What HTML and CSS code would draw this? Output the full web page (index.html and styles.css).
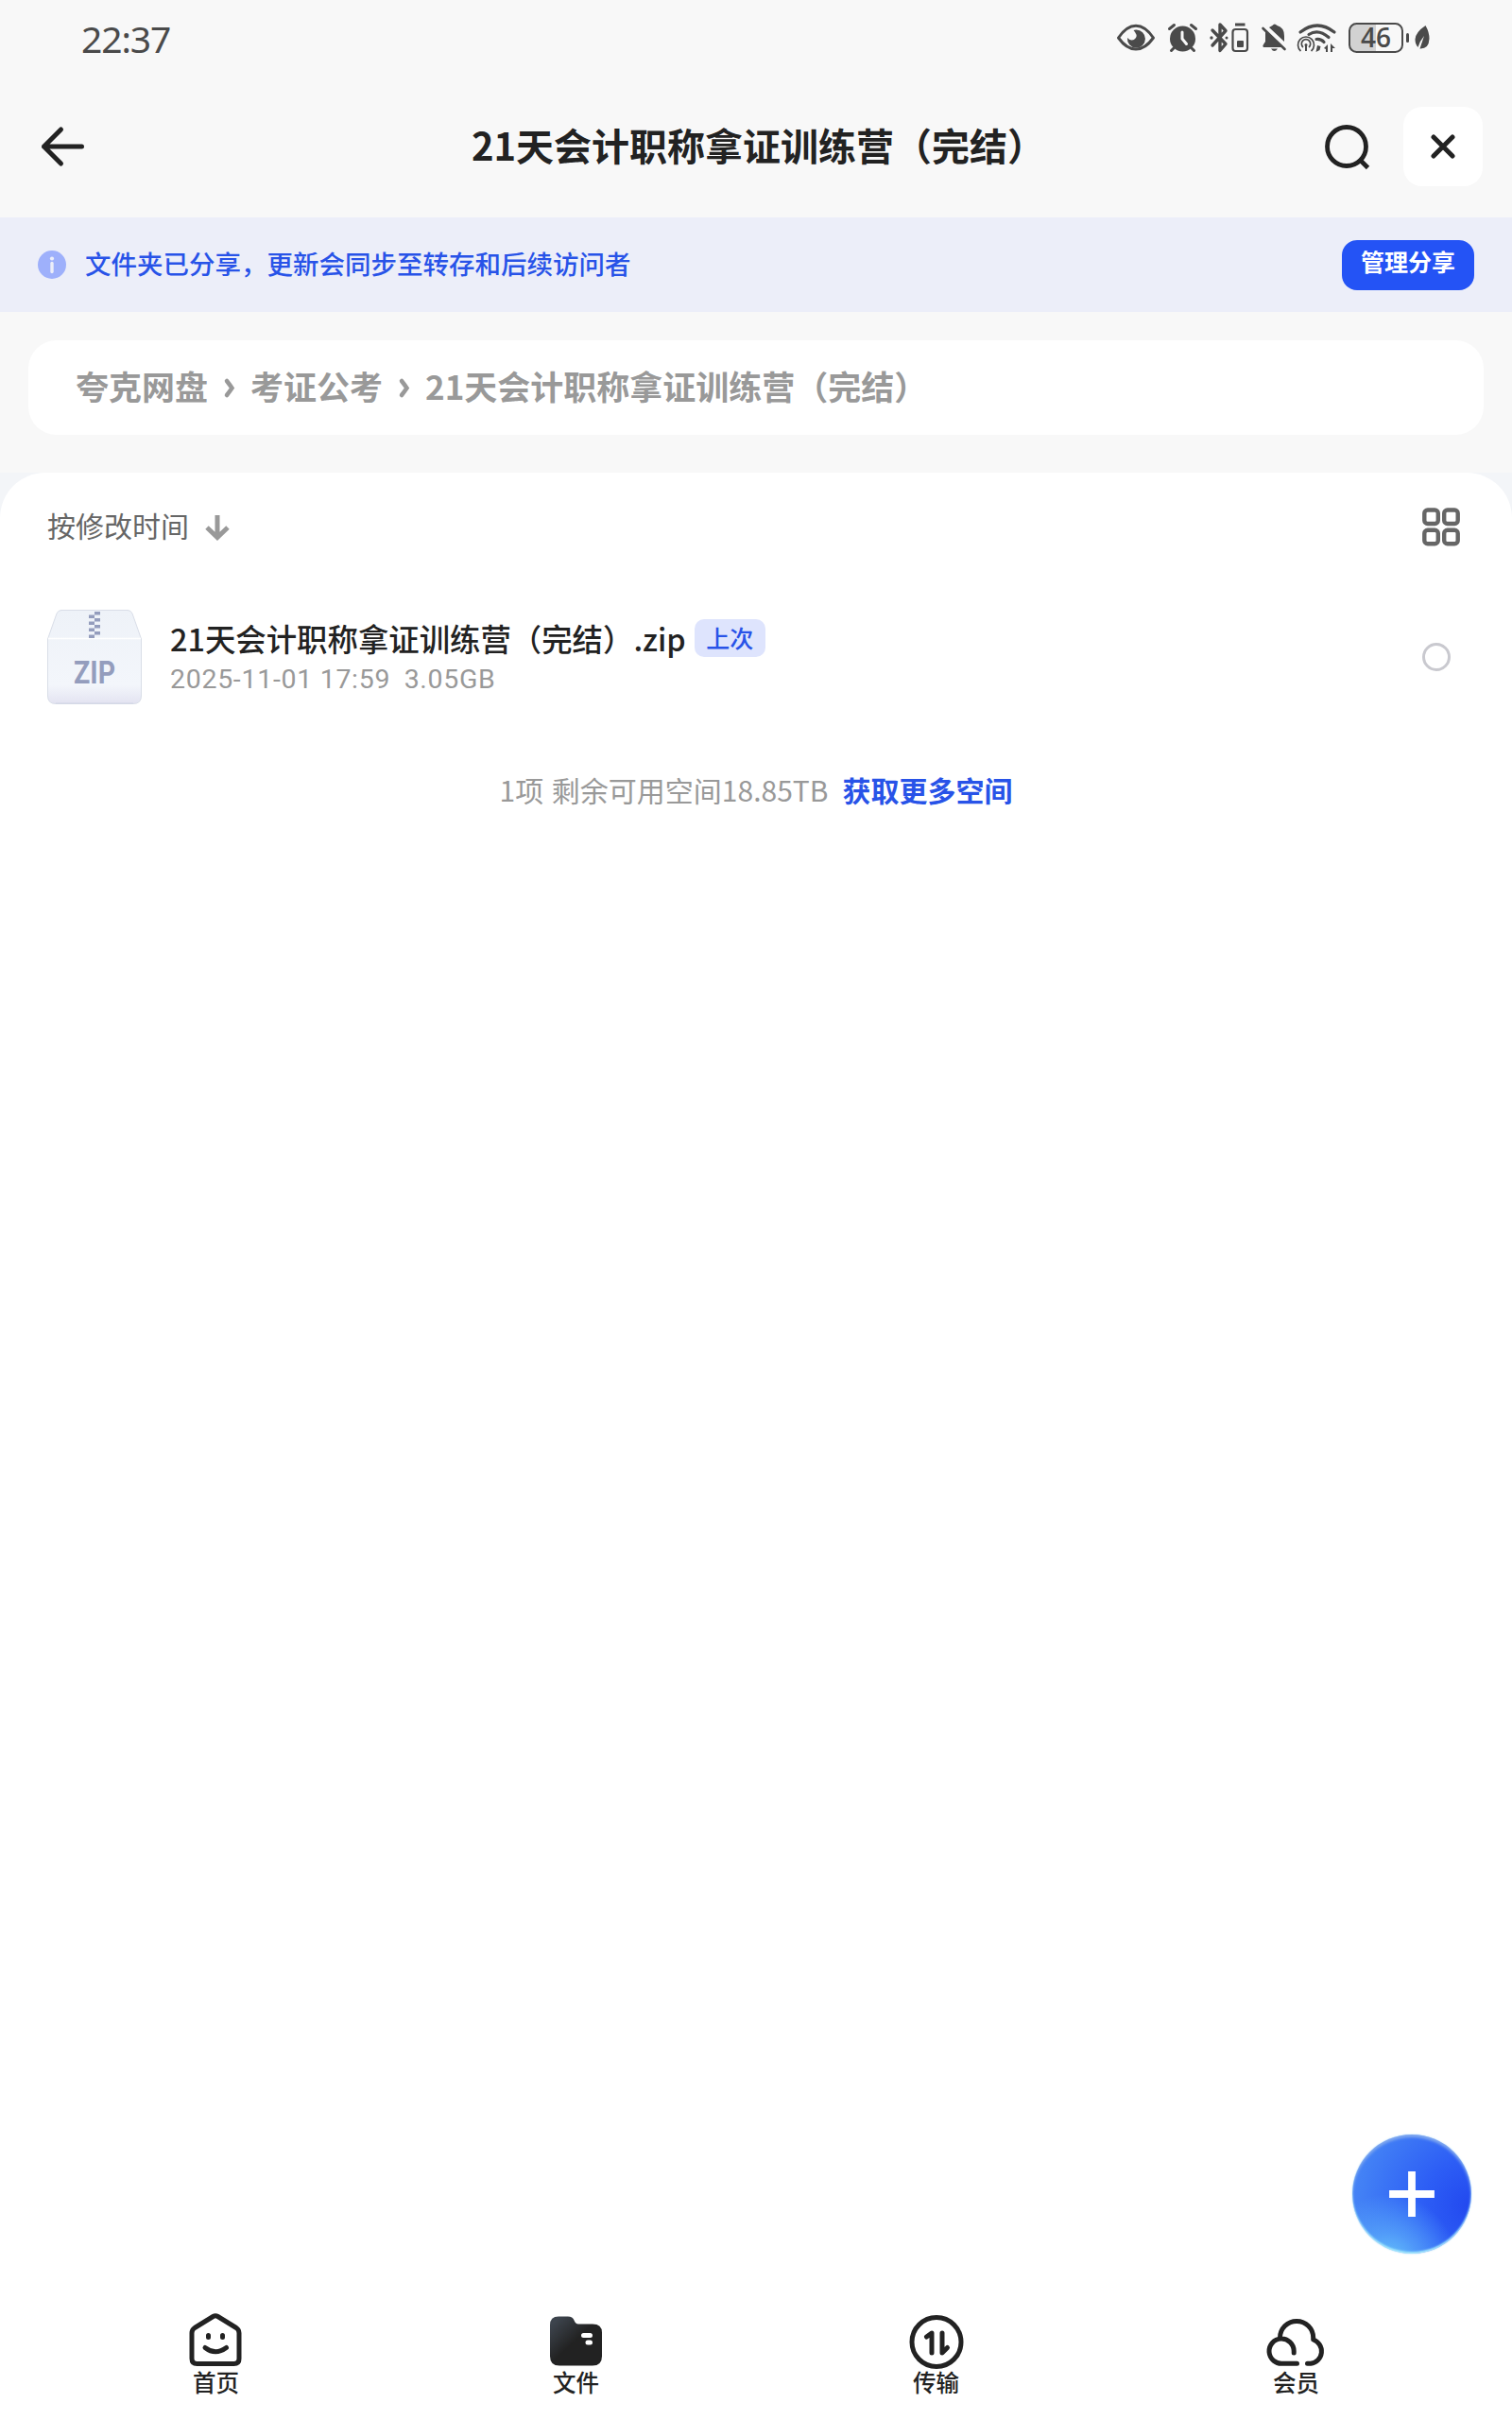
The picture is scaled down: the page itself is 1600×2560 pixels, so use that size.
FILE: index.html
```html
<!DOCTYPE html>
<html lang="zh-CN">
<head>
  <meta charset="UTF-8" />
  <meta name="viewport" content="width=device-width, initial-scale=1.0"/>
  <title>21天会计职称拿证训练营（完结）</title>
  <link rel="stylesheet" href="styles.css">
</head>
<body>

  <div class="status-bar">
    <span class="time">22:37</span>
    <div class="status-icons">
      <svg width="50" height="60" viewBox="20 0 50 60">
        <path d="M23.500 30C35 13 49 13 60.500 30C49 46 35 46 23.500 30Z" fill="none" stroke="#4a4a4a" stroke-width="3" stroke-linejoin="round"/>
        <path d="M42 21.500A9.500 9.500 0 1 1 33 30Q38 35 42 30Q44 27 39.500 22Z" fill="#4a4a4a"/>
      </svg>
      <svg width="44" height="60" viewBox="70 0 44 60">
        <circle cx="91.500" cy="31" r="13.500" fill="#4a4a4a"/>
        <path d="M77.500 20.500l5-4M105.500 20.500l-5-4M82 41l-2.500 2.500M101 41l2.500 2.500" stroke="#4a4a4a" stroke-width="3" stroke-linecap="round"/>
        <path d="M91 24v7l4.500 5.500" fill="none" stroke="#f8f8f8" stroke-width="3" stroke-linecap="round"/>
      </svg>
      <svg width="54" height="60" viewBox="114 0 54 60">
        <path d="M123 22l14 14.500-6 7V16l6 6.500L123 38" fill="none" stroke="#4a4a4a" stroke-width="3.400" stroke-linecap="round" stroke-linejoin="round"/>
        <circle cx="122" cy="30" r="1.700" fill="#4a4a4a"/><circle cx="138" cy="30" r="1.500" fill="#4a4a4a"/>
        <rect x="144.500" y="21" width="15.500" height="23" rx="3" fill="none" stroke="#4a4a4a" stroke-width="2.200"/>
        <path d="M147 16h10.500" stroke="#4a4a4a" stroke-width="3"/>
        <rect x="149" y="33" width="7" height="7" rx="1" fill="#4a4a4a"/>
      </svg>
      <svg width="40" height="60" viewBox="168 0 40 60">
        <path d="M179 22L197 40H177q-1.500-1 0-3l2-3ZM183 19l3.500-2q2-3 5 0q7.500 2 7.500 11v6ZM185 41.500h7q-3.500 5-7 0Z" fill="#4a4a4a"/>
        <path d="M176.500 20L199.500 42" stroke="#4a4a4a" stroke-width="2.600" stroke-linecap="round"/>
      </svg>
      <svg width="52" height="60" viewBox="208 0 52 60" fill="none" stroke="#4a4a4a">
        <path d="M216 24Q234 10 252 24M225 26.500Q235 20 246 29.500M233 31.500Q238 31 241 34.500" stroke-width="3.200" stroke-linecap="round"/>
        <path d="M216.500 44a8.500 8.500 0 1 1 11 0M219 40a4.700 4.700 0 1 1 6 0" stroke-width="1.700"/>
        <circle cx="222" cy="37.500" r="1.500" fill="#4a4a4a" stroke="none"/>
        <path d="M222 38v6" stroke-width="2"/>
        <path d="M234 38l3.500 1-1 4-4 2zM241 41l4-4v8h-2v-3zM248 36l5 5h-3v4h-2z" fill="#4a4a4a" stroke="none"/>
      </svg>
      <svg width="74" height="60" viewBox="260 0 74 60">
        <path d="M296 15h-21q-7 0-7 7v16q0 7 7 7h21z" fill="#d2d2d2"/>
        <rect x="268" y="15" width="56" height="30" rx="7.500" fill="none" stroke="#4a4a4a" stroke-width="2"/>
        <path d="M329.500 26.500v7" stroke="#4a4a4a" stroke-width="3" stroke-linecap="round"/>
        <text x="296" y="39.500" class="battery-num" text-anchor="middle">46</text>
      </svg>
      <svg width="26" height="60" viewBox="334 0 26 60">
        <path d="M348.500 17Q338 24 337.500 31.500Q337.500 37 340.500 40Q342 34 347 28Q345 34 342.500 41.500Q352 42 352.500 31Q352.500 24 348.500 17Z" fill="#4a4a4a"/>
      </svg>
    </div>
  </div>

  <header class="header">
    <button class="back" aria-label="返回">
      <svg width="46" height="44" viewBox="0 0 46 44"><path d="M20.500 4L2.500 22L20.500 40M2.500 22H42.500" fill="none" stroke="#222" stroke-width="5" stroke-linecap="round" stroke-linejoin="round"/></svg>
    </button>
    <h1 class="title">21天会计职称拿证训练营（完结）</h1>
    <div class="header-actions">
      <button aria-label="搜索">
        <svg width="50" height="50" viewBox="0 0 50 50" fill="none" stroke="#222" stroke-width="4.800"><circle cx="25" cy="25" r="20.500"/><path d="M39 39l8.500 8.500"/></svg>
      </button>
      <button class="close" aria-label="关闭">
        <svg width="26" height="26" viewBox="0 0 26 26"><path d="M3 3l20 20M23 3l-20 20" stroke="#222" stroke-width="5" stroke-linecap="round"/></svg>
      </button>
    </div>
  </header>

  <div class="notice">
    <svg width="30" height="30" viewBox="0 0 30 30"><circle cx="15" cy="15" r="15" fill="#9eb0fb"/><circle cx="15" cy="8.500" r="2.100" fill="#eceef9"/><path d="M15 13.500v9" stroke="#eceef9" stroke-width="3.400" stroke-linecap="round"/></svg>
    <span class="notice-text">文件夹已分享，更新会同步至转存和后续访问者</span>
    <button class="manage-btn">管理分享</button>
  </div>

  <nav class="breadcrumb">
    <span>夸克网盘</span>
    <svg width="12" height="24" viewBox="0 0 12 24"><path d="M3 5Q6.500 9.500 8.500 12.500Q6.500 15.500 3 20" fill="none" stroke="#999" stroke-width="4.500" stroke-linecap="round"/></svg>
    <span>考证公考</span>
    <svg width="12" height="24" viewBox="0 0 12 24"><path d="M3 5Q6.500 9.500 8.500 12.500Q6.500 15.500 3 20" fill="none" stroke="#999" stroke-width="4.500" stroke-linecap="round"/></svg>
    <span>21天会计职称拿证训练营（完结）</span>
  </nav>

  <div class="panel-wrap">
    <main class="panel">
      <div class="toolbar">
        <span class="sort">按修改时间</span>
        <svg class="sort-arrow" width="28" height="28" viewBox="0 0 28 28"><path d="M14 1v23M3 14l11 10.500L25 14" fill="none" stroke="#999" stroke-width="5"/></svg>
        <svg class="grid-icon" width="40" height="41" viewBox="0 0 40 41" fill="none" stroke="#666" stroke-width="4.400">
          <rect x="2.300" y="2.500" width="14.500" height="14.500" rx="3.500"/><rect x="23.200" y="2.500" width="14.500" height="14.500" rx="3.500"/>
          <rect x="2.300" y="23.700" width="14.500" height="14.500" rx="3.500"/><rect x="23.200" y="23.700" width="14.500" height="14.500" rx="3.500"/>
        </svg>
      </div>

      <div class="file">
        <svg width="100" height="100" viewBox="0 0 100 100">
          <defs>
            <linearGradient id="zipFace" x1="0" y1="0" x2="0" y2="1">
              <stop offset="0" stop-color="#eef2f8"/><stop offset=".8" stop-color="#f3f6fb"/><stop offset="1" stop-color="#e3e3f1"/>
            </linearGradient>
          </defs>
          <path d="M.5 31L10 4Q11.500 .5 15 .5H85Q88.500 .5 90 4L99.500 31V91Q99.500 99.500 91 99.500H9Q.5 99.500 .5 91Z" fill="url(#zipFace)" stroke="#d9dee8"/>
          <path d="M1 30.500H99" stroke="#fff" stroke-width="1.500"/>
          <path d="M9 99H91" stroke="#cfd3e3" stroke-width="1.200"/>
          <path d="M50 2h6v3.500h-6zM44 5.500h6v3.500h-6zM50 9h6v3.500h-6zM44 12.500h6v3.500h-6zM50 16h6v3.500h-6zM44 19.500h6v3.500h-6zM50 23h6v3.500h-6zM44 26.500h6v3.500h-6z" fill="#949dbd"/>
          <text x="50" y="78" class="zip-label" text-anchor="middle" textLength="44" lengthAdjust="spacingAndGlyphs">ZIP</text>
        </svg>
        <div class="file-info">
          <div class="file-name"><span class="name-text">21天会计职称拿证训练营（完结）.zip</span><span class="tag">上次</span></div>
          <div class="file-meta"><span>2025-11-01 17:59</span><span>3.05GB</span></div>
        </div>
        <span class="check"></span>
      </div>

      <div class="space"><span>1项 剩余可用空间18.85TB</span><a>获取更多空间</a></div>
    </main>
  </div>

  <button class="fab" aria-label="新建">
    <svg width="48" height="48" viewBox="0 0 48 48"><path d="M24 4v40M4 24h40" stroke="#fff" stroke-width="7.800" stroke-linecap="square"/></svg>
  </button>

  <nav class="tab-bar">
    <a class="tab">
      <svg width="60" height="60" viewBox="1 1 60 60" fill="none" stroke="#222" stroke-width="5" stroke-linecap="round" stroke-linejoin="round">
        <path d="M27.500 5.500Q30 4 32.500 5.500L52 17.500Q55 19.500 55 23V50Q55 55.500 49.500 55.500H10.500Q5 55.500 5 50V23Q5 19.500 8 17.500Z"/>
        <path d="M22.500 25.500v2M37.500 25.500v2M19 38.500Q30 47 41.500 38.500"/>
      </svg>
      <span>首页</span>
    </a>
    <a class="tab">
      <svg width="60" height="60" viewBox="0 1.500 60 60">
        <defs><linearGradient id="folder" x1="0" y1="0" x2=".65" y2=".65"><stop offset=".15" stop-color="#3d444d"/><stop offset=".75" stop-color="#222"/></linearGradient></defs>
        <path d="M11 6H21Q26 6 27.500 10Q29 14 32 14H47Q57 14 57 23V48Q57 58 47 58H12Q2 58 2 48V15Q2 6 11 6Z" fill="url(#folder)"/>
        <path d="M37.500 26h7M42 33.500h2.500" stroke="#fff" stroke-width="5" stroke-linecap="round"/>
      </svg>
      <span>文件</span>
    </a>
    <a class="tab">
      <svg width="60" height="60" viewBox="0 0 60 60" fill="none" stroke="#222" stroke-width="5" stroke-linecap="round" stroke-linejoin="round">
        <circle cx="30" cy="31.500" r="26"/>
        <path d="M25 43V22L19.500 26M36 22V43L41.500 37.500"/>
      </svg>
      <span>传输</span>
    </a>
    <a class="tab">
      <svg width="60" height="60" viewBox="0 0 60 60" fill="none" stroke="#222" stroke-width="5" stroke-linecap="round" stroke-linejoin="round">
        <path d="M12.500 28V27A17.600 17.600 0 0 1 47.700 27V29A13 13 0 0 1 45 54.200H41.500M30.500 54.200H15.500A13.100 13.100 0 1 1 27.200 41V43"/>
      </svg>
      <span>会员</span>
    </a>
  </nav>

</body>
</html>
```
FILE: styles.css
```css
* { box-sizing: border-box; }
body {
  margin: 0;
  height: 2560px;
  display: flex;
  flex-direction: column;
  background: #f8f8f8;
  color: #222;
  font-family: "Noto Sans CJK SC", sans-serif;
}
svg { display: block; flex: none; overflow: visible; }
button {
  border: none;
  padding: 0;
  background: none;
  font-family: inherit;
}
.status-bar {
  height: 80px;
  flex: none;
  display: flex;
  justify-content: space-between;
  align-items: center;
  padding: 0 80px 0 86px;
}
.time {
  font: 400 39px "Noto Sans", sans-serif;
  letter-spacing: -1.1px;
  color: #4a4a4a;
}
.status-icons { display: flex; }
.battery-num {
  font: 600 28px "Open Sans", sans-serif;
  fill: #4a4a4a;
}

.header {
  height: 150px;
  flex: none;
  display: grid;
  grid-template-columns: 192px 1fr 200px;
  align-items: center;
  padding: 0 31px 0 44px;
}
.title {
  margin: 0;
  padding-bottom: 5px;
  text-align: center;
  font-size: 40px;
  line-height: 60px;
  font-weight: 700;
  white-space: nowrap;
}
.header-actions {
  display: flex;
  align-items: center;
  justify-content: flex-end;
  gap: 35px;
}
.close {
  width: 84px;
  height: 84px;
  display: flex;
  align-items: center;
  justify-content: center;
  background: #fff;
  border-radius: 20px;
}

.notice {
  height: 100px;
  flex: none;
  display: flex;
  align-items: center;
  padding: 0 40px;
  background: #eceef9;
}
.notice-text {
  flex: 1;
  margin-left: 20px;
  padding-bottom: 4px;
  font-size: 27.5px;
  font-weight: 500;
  color: #2853e8;
}
.manage-btn {
  width: 140px;
  height: 53px;
  padding-bottom: 8px;
  border-radius: 16px;
  background: #2453f5;
  color: #fff;
  font-size: 25px;
  line-height: 45px;
  font-weight: 700;
}

.breadcrumb {
  height: 100px;
  flex: none;
  margin: 30px 30px 40px;
  padding: 0 50px;
  display: flex;
  align-items: center;
  gap: 16.5px;
  background: #fff;
  border-radius: 30px;
  color: #999;
  font-size: 35px;
  font-weight: 700;
}
.breadcrumb span { padding-bottom: 5px; }

.panel-wrap {
  flex: 1;
  display: flex;
  background: linear-gradient(#f3f5f8 100px, #fff 100px);
}
.panel {
  flex: 1;
  padding: 0 50px;
  background: #fff;
  border-radius: 48px 48px 0 0;
}
.toolbar {
  height: 115px;
  display: flex;
  align-items: center;
}
.sort {
  padding-bottom: 5px;
  font-size: 30px;
  color: #666;
}
.sort-arrow { margin-left: 16px; }
.grid-icon { margin: 0 5px 0 auto; }

.file {
  height: 160px;
  display: flex;
  align-items: center;
}
.zip-label {
  font: 700 34px Roboto, sans-serif;
  fill: #949dbd;
}
.file-info { margin: 5px 0 0 30px; }
.file-name {
  height: 42px;
  display: flex;
  align-items: center;
  font-size: 32.4px;
  font-weight: 500;
}
.name-text { padding-bottom: 2px; }
.tag {
  margin-left: 9px;
  width: 75px;
  height: 40px;
  border-radius: 10px;
  background: #dee4fd;
  color: #2853e8;
  font-size: 25px;
  line-height: 38px;
  text-align: center;
}
.file-meta {
  height: 45px;
  display: flex;
  align-items: center;
  gap: 14.5px;
  font: 28.5px Roboto, sans-serif;
  letter-spacing: .7px;
  color: #999;
}
.check {
  margin: 0 15px 0 auto;
  width: 30px;
  height: 30px;
  border: 3px solid #c9c9cf;
  border-radius: 50%;
}
.space {
  height: 120px;
  display: flex;
  align-items: center;
  justify-content: center;
  gap: 15px;
  font-size: 30px;
  color: #999;
}
.space span { word-spacing: 2px; }
.space a {
  color: #2853e8;
  font-weight: 700;
}

.fab {
  position: fixed;
  right: 43px;
  bottom: 176px;
  width: 126px;
  height: 126px;
  display: flex;
  align-items: center;
  justify-content: center;
  border-radius: 50%;
  background:
    radial-gradient(circle at 30% 108%, #67c6fb 0, rgba(90, 170, 250, .7) 20%, rgba(70, 130, 250, 0) 45%),
    radial-gradient(circle at 100% 60%, #2248ef 0, #2d5ef5 35%, #4280f5 80%, #4d8bf6 100%);
  box-shadow: inset 0 -2px 2px #a4e8fb, inset 0 3px 3px #80a8ef, 0 0 2px #a5d9f8;
}

.tab-bar {
  height: 125px;
  flex: none;
  display: flex;
  padding: 11px 38px 0;
  background: #fff;
}
.tab {
  flex: 1;
  display: flex;
  flex-direction: column;
  align-items: center;
  font-size: 24.5px;
  line-height: 28px;
  font-weight: 500;
}
```
